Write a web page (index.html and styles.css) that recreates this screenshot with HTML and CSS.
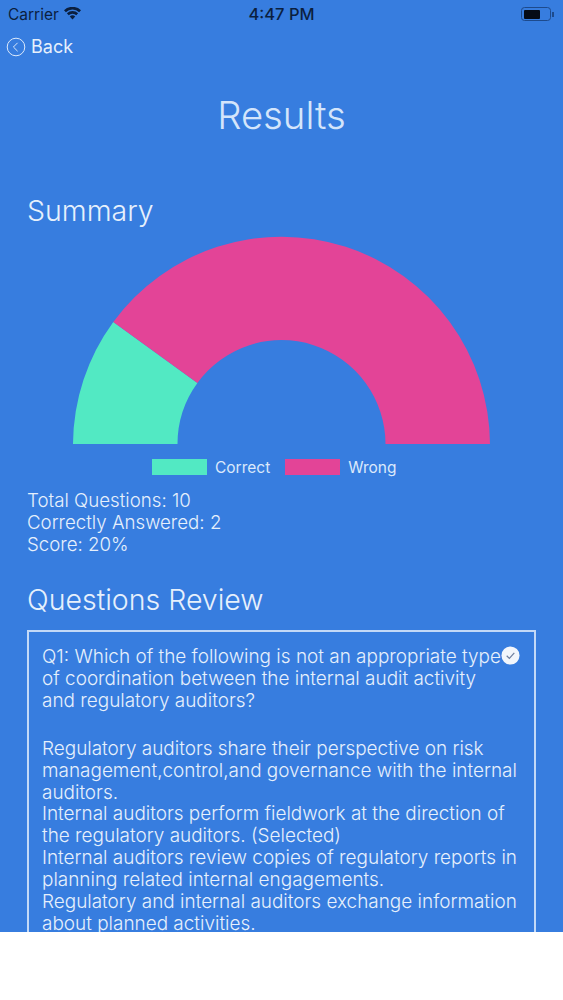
FILE: index.html
```html
<!DOCTYPE html>
<html lang="en">
<head>
<meta charset="utf-8">
<title>Results</title>
<link rel="stylesheet" href="styles.css">
</head>
<body>
<main class="screen">
  <header class="status">
    <div class="status-left">
      <span>Carrier</span>
      <svg class="wifi" viewBox="0 0 20 15" width="17" height="13"><path d="M10 14.5 6.8 11a4.6 4.6 0 0 1 6.4 0z" fill="#0b1f3f"/><path d="M5.5 9.5 3.4 7.2a9.6 9.6 0 0 1 13.2 0l-2.1 2.3a6.6 6.6 0 0 0-9 0z" fill="#0b1f3f"/><path d="M2.2 5.9 0 3.6a14.6 14.6 0 0 1 20 0l-2.2 2.3a11.4 11.4 0 0 0-15.6 0z" fill="#0b1f3f"/></svg>
    </div>
    <div class="status-time">4:47 PM</div>
    <div class="status-right">
      <div class="battery"><div class="battery-fill"></div></div>
      <div class="battery-cap"></div>
    </div>
  </header>
  <nav class="nav">
    <svg class="back-icon" viewBox="0 0 20 20" width="20" height="20"><circle cx="10" cy="10" r="8.8" fill="none" stroke="#dbe9fb" stroke-width="1"/><path d="M11.6 5.8 7.4 10l4.2 4.2" fill="none" stroke="#dbe9fb" stroke-width="1"/></svg>
    <span>Back</span>
  </nav>
  <h1 class="title">Results</h1>
  <h2 class="heading summary-heading">Summary</h2>
  <div class="chart">
    <svg viewBox="0 0 563 208" width="563" height="208">
      <path d="M73 208A208.500 208.500 0 0 1 113.300 86L197.400 146.900A104 104 0 0 0 177.500 208Z" fill="#52e9c3"/>
      <path d="M113.300 86A208.500 208.500 0 0 1 490 208H385.500A104 104 0 0 0 197.400 146.900Z" fill="#e34497"/>
    </svg>
  </div>
  <div class="legend">
    <span class="swatch swatch-correct"></span><span class="legend-label">Correct</span>
    <span class="swatch swatch-wrong"></span><span class="legend-label">Wrong</span>
  </div>
  <div class="stats">
    <div>Total Questions: 10</div>
    <div>Correctly Answered: 2</div>
    <div>Score: 20%</div>
  </div>
  <h2 class="heading review-heading">Questions Review</h2>
  <section class="review">
    <div class="question-row">
      <p class="question">Q1: Which of the following is not an appropriate type of coordination between the internal audit activity and regulatory auditors?</p>
      <svg class="check" viewBox="0 0 20 20" width="19" height="19"><circle cx="10" cy="10" r="9.500" fill="#f2f6fc"/><path d="M6 10.300 8.800 13 14 7.300" fill="none" stroke="#6f7f9f" stroke-width="1.300"/></svg>
    </div>
    <p class="answers">Regulatory auditors share their perspective on risk management,control,and governance with the internal auditors.<br>Internal auditors perform fieldwork at the direction of the regulatory auditors. (Selected)<br>Internal auditors review copies of regulatory reports in planning related internal engagements.<br>Regulatory and internal auditors exchange information about planned activities.</p>
  </section>
</main>
</body>
</html>
```
FILE: styles.css
```css
* { box-sizing: border-box; }
html, body { margin: 0; padding: 0; background: #fff; }
body { font-family: Inter, "Liberation Sans", sans-serif; color: #dbe9fb; }
.screen { width: 563px; height: 932px; background: #377ddf; overflow: hidden; }
.status { height: 28px; padding: 0 8px; display: grid; grid-template-columns: 1fr auto 1fr; align-items: center; font-size: 15.500px; color: #0b1f3f; }
.status-left { display: flex; align-items: center; gap: 5px; }
.wifi { margin-top: -2px; }
.status-time { font-weight: 500; font-size: 16.500px; }
.status-right { display: flex; justify-content: flex-end; align-items: center; }
.battery { width: 30px; height: 14px; border: 1px solid #1d4a8c; border-radius: 3.500px; padding: 1.500px; }
.battery-fill { width: 16px; height: 100%; background: #050b16; border-radius: 1px; }
.battery-cap { width: 2px; height: 5px; background: #1d4a8c; margin-left: 1px; margin-right: 1px; }
.nav { height: 37px; padding-left: 6px; display: flex; align-items: center; gap: 5px; font-size: 18px; font-weight: 400; color: #e6f0fc; }
.title { margin: 28px 0 0; height: 44px; line-height: 44px; text-align: center; font-size: 38.300px; font-weight: 300; color: #d4e5fb; }
.heading { margin: 0; padding-left: 27px; font-size: 28.500px; font-weight: 350; color: #e6f0fc; }
.summary-heading { margin-top: 56px; height: 36px; line-height: 36px; }
.chart { margin-top: 7px; height: 208px; }
.chart svg { display: block; }
.legend { margin-top: 14px; height: 18px; padding-left: 152px; display: flex; align-items: center; font-size: 15.500px; color: #dbe9fb; }
.swatch { width: 55px; height: 16px; }
.swatch-correct { background: #52e9c3; }
.swatch-wrong { background: #e34497; }
.legend-label { margin-left: 8px; margin-right: 15px; }
.stats { margin-top: 14px; padding-left: 27px; font-size: 18.700px; line-height: 22px; font-weight: 350; color: #e6f0fc; }
.review-heading { margin-top: 26px; height: 36px; line-height: 36px; }
.review { margin: 12px 27px 0; height: 320px; border: 2px solid #c3d9f7; padding: 14px 13px 0; font-size: 18.950px; line-height: 21.900px; font-weight: 350; color: #e6f0fc; }
.question-row { position: relative; }
.question { margin: 0; padding-right: 12px; }
.check { position: absolute; top: 0; right: 1px; }
.answers { margin: 26px 0 0; }
```
